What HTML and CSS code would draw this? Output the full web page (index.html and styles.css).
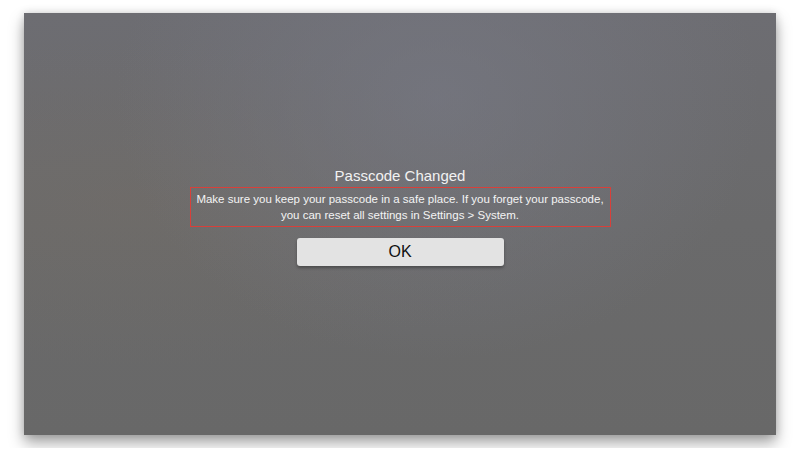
FILE: index.html
```html
<!DOCTYPE html>
<html lang="en">

<head>
    <meta charset="UTF-8" />
    <meta name="viewport" content="width=device-width, initial-scale=1.0" />
    <title>Passcode Changed</title>
    <link rel="stylesheet" href="styles.css">
</head>

<body>
    <div class="screen">
        <div class="alert">
            <h2 class="alert-title">Passcode Changed</h2>
            <div class="alert-message">
                <p>Make sure you keep your passcode in a safe place. If you forget your passcode,</p>
                <p>you can reset all settings in Settings &gt; System.</p>
            </div>
            <button type="button" class="ok-btn">OK</button>
        </div>
    </div>
</body>

</html>
```

FILE: styles.css
```css
body {
    font-family: "Liberation Sans", Arial, sans-serif;
    background: #ffffff;
    margin: 0;
    padding: 13px 24px;
}

.screen {
    width: 752px;
    height: 422px;
    background:
        radial-gradient(ellipse at 55% 20%, rgba(120, 122, 134, 0.6), rgba(120, 122, 134, 0) 55%),
        radial-gradient(ellipse at 15% 45%, rgba(118, 110, 100, 0.35), rgba(118, 110, 100, 0) 50%),
        linear-gradient(#6d6d72, #6a6a6b 50%, #686868);
    box-shadow: 0 8px 14px rgba(0, 0, 0, 0.35), 0 0 8px rgba(0, 0, 0, 0.15);
    display: flex;
    justify-content: center;
}

.alert {
    display: flex;
    flex-direction: column;
    align-items: center;
    padding-top: 154px;
}

.alert-title {
    color: #f2f2f2;
    font-size: 15px;
    font-weight: normal;
    margin: 0 0 2px;
    line-height: 18px;
}

.alert-message {
    color: #f4f4f4;
    font-size: 11.5px;
    line-height: 16px;
    text-align: center;
    white-space: nowrap;
    width: 421px;
    padding: 4px 0;
    box-shadow: inset 0 0 0 1px #d8403a;
}

.alert-message p {
    margin: 0;
}

.ok-btn {
    margin-top: 11px;
    width: 207px;
    height: 28px;
    background: #e3e3e3;
    color: #111111;
    border: none;
    border-radius: 3px;
    font-family: "Liberation Sans", Arial, sans-serif;
    font-size: 16px;
    box-shadow: 0 2px 3px rgba(0, 0, 0, 0.3);
}
```
